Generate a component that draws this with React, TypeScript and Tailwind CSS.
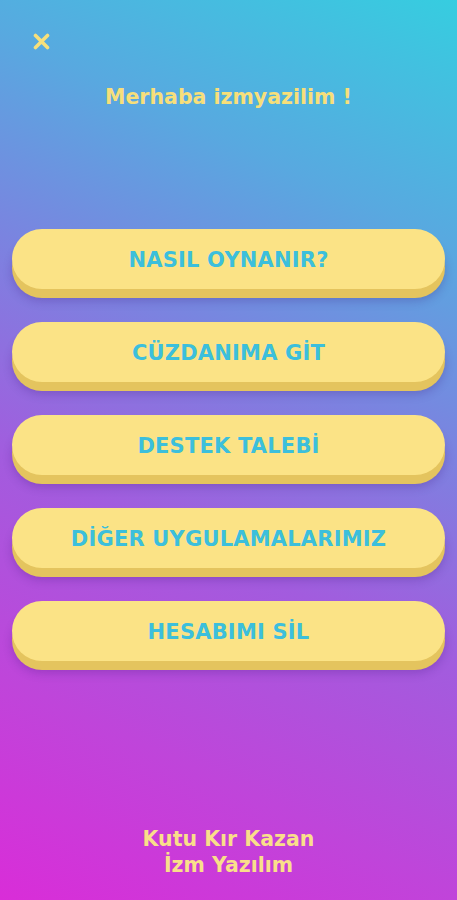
import React from "react";

const items = ["NASIL OYNANIR?", "CÜZDANIMA GİT", "DESTEK TALEBİ", "DİĞER UYGULAMALARIMIZ", "HESABIMI SİL"];

export default function App() {
  return (
    <div
      className="relative flex min-h-[900px] w-full flex-col bg-[linear-gradient(205deg,#36cde0_0%,#58a9e0_22%,#7a84e0_40%,#a25cde_60%,#bf45da_80%,#d92dd8_100%)]"
      style={{ fontFamily: '"DejaVu Sans", "Noto Sans", sans-serif' }}
    >
      <div className="pl-[33px] pt-[33px]">
        <svg width="17" height="17" viewBox="0 0 17 17">
          <path d="M2.5 2.5 L14.5 14.5 M14.5 2.5 L2.5 14.5" stroke="#f7e07c" strokeWidth="3.6" strokeLinecap="round" />
        </svg>
      </div>
      <div className="mt-[34px] text-center text-[20.5px] font-bold leading-[26px] text-[#f7df7a]">
        Merhaba izmyazilim !
      </div>
      <div className="mt-[119px] flex flex-col gap-[33px] px-[12px]">
        {items.map((t) => (
          <button
            key={t}
            className="flex h-[60px] w-full items-center justify-center rounded-full bg-[#fbe386] pt-[3px] text-[21px] font-bold tracking-[0.2px] text-[#3cbfdc] shadow-[0_9px_0_#e4c45e,0_12px_10px_rgba(60,20,120,0.25)]"
          >
            {t}
          </button>
        ))}
      </div>
      <div className="mt-auto pb-[22px] text-center text-[20.5px] font-semibold leading-[26px] text-[#f9df8a]">
        <div>Kutu Kır Kazan</div>
        <div>İzm Yazılım</div>
      </div>
    </div>
  );
}
